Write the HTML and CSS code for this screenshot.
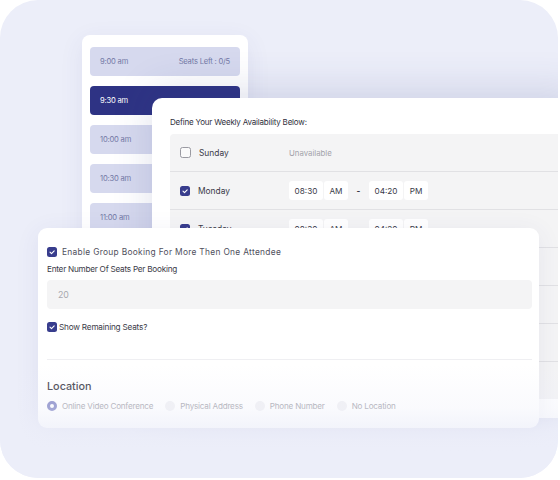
FILE: index.html
```html
<!DOCTYPE html>
<html>
<head>
<meta charset="utf-8">
<link rel="stylesheet" href="styles.css">
</head>
<body>
<div class="frame">
  <div class="card slots">
    <div class="slot"><span>9:00 am</span><span>Seats Left : 0/5</span></div>
    <div class="slot active"><span>9:30 am</span></div>
    <div class="slot"><span>10:00 am</span></div>
    <div class="slot"><span>10:30 am</span></div>
    <div class="slot"><span>11:00 am</span></div>
  </div>

  <div class="card week">
    <div class="week-title">Define Your Weekly Availability Below:</div>
    <div class="table">
      <div class="row">
        <div class="day"><span class="cb"></span><span>Sunday</span></div>
        <div class="unavail">Unavailable</div>
      </div>
      <div class="row">
        <div class="day"><span class="cb on"><svg viewBox="0 0 10 10"><path d="M3 5.2l1.5 1.5L7.2 3.8"/></svg></span><span>Monday</span></div>
        <div class="times">
          <span class="tbox w1">08:30</span><span class="tbox w2">AM</span><span class="dash">-</span><span class="tbox w1">04:20</span><span class="tbox w2">PM</span>
        </div>
      </div>
      <div class="row">
        <div class="day"><span class="cb on"><svg viewBox="0 0 10 10"><path d="M3 5.2l1.5 1.5L7.2 3.8"/></svg></span><span>Tuesday</span></div>
        <div class="times">
          <span class="tbox w1">08:30</span><span class="tbox w2">AM</span><span class="dash">-</span><span class="tbox w1">04:20</span><span class="tbox w2">PM</span>
        </div>
      </div>
      <div class="row"></div>
      <div class="row"></div>
      <div class="row"></div>
      <div class="row last"></div>
    </div>
  </div>

  <div class="card group">
    <label class="check-line first"><span class="cb on"><svg viewBox="0 0 10 10"><path d="M3 5.2l1.5 1.5L7.2 3.8"/></svg></span><span>Enable Group Booking For More Then One Attendee</span></label>
    <div class="field-label">Enter Number Of Seats Per Booking</div>
    <div class="input">20</div>
    <label class="check-line tight"><span class="cb on"><svg viewBox="0 0 10 10"><path d="M3 5.2l1.5 1.5L7.2 3.8"/></svg></span><span>Show Remaining Seats?</span></label>
    <div class="divider"></div>
    <div class="loc-title">Location</div>
    <div class="radios">
      <span class="radio on"></span><span class="rlabel">Online Video Conference</span>
      <span class="radio"></span><span class="rlabel">Physical Address</span>
      <span class="radio"></span><span class="rlabel">Phone Number</span>
      <span class="radio"></span><span class="rlabel">No Location</span>
    </div>
  </div>

  <div class="fade"></div>
</div>
</body>
</html>
```

FILE: styles.css
```css
* { box-sizing: border-box; }
html, body { margin: 0; padding: 0; background: #ffffff; }
body {
  font-family: "Inter", "Liberation Sans", sans-serif;
  color: #3b3b4a;
}
.frame {
  position: relative;
  width: 558px;
  height: 478px;
  background: #eceef9;
  border-radius: 38px;
  overflow: hidden;
}
.card {
  position: absolute;
  background: #ffffff;
}

/* slot list */
.slots {
  left: 82px;
  top: 35px;
  width: 166px;
  height: 215px;
  overflow: hidden;
  border-radius: 8px;
  padding: 12px 8px;
  display: flex;
  flex-direction: column;
  gap: 10px;
  box-shadow: 0 6px 24px rgba(60, 70, 140, 0.08);
}
.slot {
  height: 29px;
  flex: none;
  border-radius: 4px;
  background: #d6d9ee;
  color: #7479a6;
  font-size: 7.6px;
  letter-spacing: -0.2px;
  display: flex;
  align-items: center;
  justify-content: space-between;
  padding: 0 10px;
}
.slot.active {
  background: #2e3384;
  color: #ffffff;
}

/* weekly card */
.week {
  left: 152px;
  top: 98px;
  width: 430px;
  height: 320px;
  border-radius: 10px 0 0 10px;
  padding: 18px 0 0 18px;
  box-shadow: 0 -8px 40px rgba(50, 60, 130, 0.16);
}
.week-title {
  font-size: 8px;
  letter-spacing: -0.2px;
  line-height: 12px;
  color: #2f2f3c;
  margin-bottom: 6px;
}
.table {
  background: #f4f4f5;
  border-radius: 4px 0 0 4px;
}
.row {
  height: 38px;
  border-bottom: 1px solid #e1e1e4;
  display: flex;
  align-items: center;
  padding-left: 10px;
}
.row.last { border-bottom: none; height: 37px; }
.day {
  width: 109px;
  display: flex;
  align-items: center;
  gap: 8px;
  font-size: 8.4px;
  color: #3a3a48;
}
.cb {
  width: 11px;
  height: 11px;
  border: 1px solid #9a9aa2;
  border-radius: 2.5px;
  flex: none;
  display: inline-flex;
  align-items: center;
  justify-content: center;
  background: #fafafa;
}
.cb.on {
  width: 10px;
  height: 10px;
  border: none;
  background: #383d8d;
}
.cb svg {
  width: 10px;
  height: 10px;
  fill: none;
  stroke: #ffffff;
  stroke-width: 1.1;
  stroke-linecap: round;
  stroke-linejoin: round;
}
.unavail {
  font-size: 7.8px;
  color: #a3a3aa;
}
.times {
  display: flex;
  align-items: center;
  gap: 1px;
  font-size: 8.2px;
  color: #3a3a48;
}
.tbox {
  height: 19px;
  background: #ffffff;
  border-radius: 3px;
  display: inline-flex;
  align-items: center;
  justify-content: center;
}
.tbox.w1 { width: 34px; }
.tbox.w2 { width: 24px; }
.dash {
  width: 19px;
  text-align: center;
  font-weight: 700;
}

/* group booking card */
.group {
  left: 38px;
  top: 228px;
  width: 501px;
  height: 200px;
  border-radius: 9px;
  padding: 19px 7px 0 9px;
  display: flex;
  flex-direction: column;
  box-shadow: 0 4px 24px rgba(60, 70, 140, 0.08);
}
.check-line {
  display: flex;
  align-items: center;
  gap: 5px;
  font-size: 8.4px;
  letter-spacing: 0.3px;
  color: #50505d;
  height: 10px;
}
.check-line.tight {
  gap: 2px;
  margin-top: 13px;
  color: #3b3b48;
  font-size: 8.2px;
  letter-spacing: -0.2px;
}
.field-label {
  margin-top: 7px;
  font-size: 8.2px;
  letter-spacing: -0.25px;
  line-height: 10px;
  color: #3b3b48;
}
.input {
  margin-top: 6px;
  height: 29px;
  background: #f4f4f5;
  border-radius: 4px;
  padding-left: 11px;
  display: flex;
  align-items: center;
  font-size: 8.8px;
  color: #a8a8ae;
}
.divider {
  margin-top: 27px;
  height: 1px;
  background: #efeff2;
}
.loc-title {
  margin-top: 20px;
  font-size: 10.8px;
  line-height: 13px;
  color: #3f3f4c;
  font-weight: 500;
}
.radios {
  margin-top: 7px;
  display: flex;
  align-items: center;
  font-size: 8.1px;
  letter-spacing: -0.2px;
  color: #a5a5ad;
  height: 12px;
}
.radio {
  width: 10px;
  height: 10px;
  border-radius: 50%;
  background: #f1f1f4;
  flex: none;
  margin-right: 5px;
}
.radio.on {
  background: #ffffff;
  border: 3px solid #8589c6;
}
.rlabel { margin-right: 12px; }

.fade {
  position: absolute;
  left: 0;
  top: 365px;
  width: 558px;
  height: 113px;
  background: linear-gradient(to bottom, rgba(236, 238, 249, 0) 0%, rgba(236, 238, 249, 0.28) 38%, rgba(236, 238, 249, 0.7) 58%, rgba(236, 238, 249, 1) 78%);
  pointer-events: none;
}
```
